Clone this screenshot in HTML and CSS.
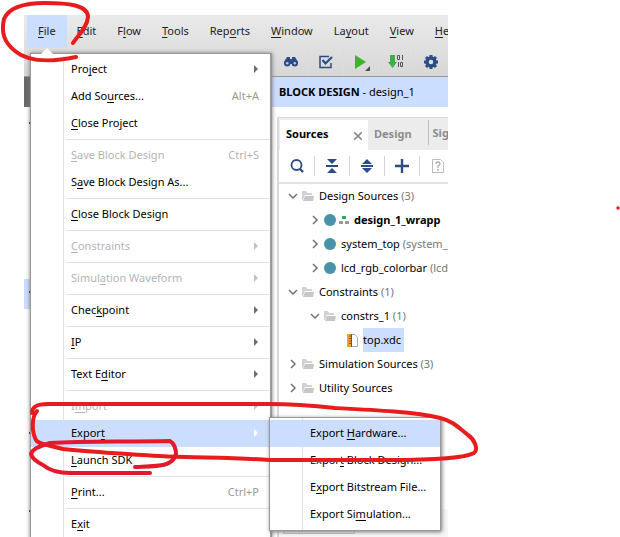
FILE: index.html
```html
<!DOCTYPE html>
<html lang="en">
<head>
<meta charset="utf-8">
<title>Block Design</title>
<link rel="stylesheet" href="styles.css">
</head>
<body>
<svg class="defs" aria-hidden="true">
  <symbol id="folder" viewBox="0 0 12 12"><path d="M0 1h4l1 2h5v2H3l-2 5H0z" fill="#d2d2d2"/><path d="M3 6h9l-1 5H1z" fill="#c6c6c6"/></symbol>
  <symbol id="open" viewBox="0 0 10 10"><path d="M1 3l4 4 4-4" fill="none" stroke="#737373" stroke-width="1.5"/></symbol>
  <symbol id="closed" viewBox="0 0 10 10"><path d="M3 1l4 4-4 4" fill="none" stroke="#737373" stroke-width="1.5"/></symbol>
</svg>
<main class="app">
  <div class="chrome">
    <nav class="menubar">
      <div class="file">
        <button class="top active"><u>F</u>ile</button>
        <div class="menu">
          <ul>
            <li><button>Pro<u>j</u>ect<i class="arrow"></i></button></li>
            <li><button>Add So<u>u</u>rces...<kbd>Alt+A</kbd></button></li>
            <li><button><u>C</u>lose Project</button></li>
            <li class="sep"></li>
            <li><button disabled><u>S</u>ave Block Design<kbd>Ctrl+S</kbd></button></li>
            <li><button>S<u>a</u>ve Block Design As...</button></li>
            <li class="sep"></li>
            <li><button><u>C</u>lose Block Design</button></li>
            <li class="sep"></li>
            <li><button disabled><u>C</u>onstraints<i class="arrow"></i></button></li>
            <li class="sep"></li>
            <li><button disabled>Simul<u>a</u>tion Waveform<i class="arrow"></i></button></li>
            <li class="sep"></li>
            <li><button>Chec<u>k</u>point<i class="arrow"></i></button></li>
            <li class="sep"></li>
            <li><button><u>I</u>P<i class="arrow"></i></button></li>
            <li class="sep"></li>
            <li><button>Text E<u>d</u>itor<i class="arrow"></i></button></li>
            <li class="sep"></li>
            <li><button disabled>I<u>m</u>port<i class="arrow"></i></button></li>
            <li class="parent"><button class="hot">Expor<u>t</u><i class="arrow"></i></button>
              <ul class="submenu">
                <li><button class="hot">Export <u>H</u>ardware...</button></li>
                <li><button>Expor<u>t</u> Block Design...</button></li>
                <li><button>E<u>x</u>port Bitstream File...</button></li>
                <li><button>Export Si<u>m</u>ulation...</button></li>
              </ul>
            </li>
            <li><button><u>L</u>aunch SDK</button></li>
            <li class="sep"></li>
            <li><button><u>P</u>rint...<kbd>Ctrl+P</kbd></button></li>
            <li class="sep"></li>
            <li><button>E<u>x</u>it</button></li>
          </ul>
        </div>
      </div>
      <button class="top"><u>E</u>dit</button>
      <button class="top">F<u>l</u>ow</button>
      <button class="top"><u>T</u>ools</button>
      <button class="top">Rep<u>o</u>rts</button>
      <button class="top"><u>W</u>indow</button>
      <button class="top">La<u>y</u>out</button>
      <button class="top"><u>V</u>iew</button>
      <button class="top"><u>H</u>e</button>
    </nav>
    <div class="toolbar">
      <button aria-label="Find"><svg width="16" height="16" viewBox="0 0 16 16"><path d="M4 3h3v2h2V3h3l3 5v2H1V8z" fill="#2d4b84"/><circle cx="4.2" cy="9.3" r="3.2" fill="#2d4b84"/><circle cx="11.8" cy="9.3" r="3.2" fill="#2d4b84"/><circle cx="4.2" cy="9.3" r="1.3" fill="#b7c4df"/><circle cx="11.8" cy="9.3" r="1.3" fill="#b7c4df"/></svg></button>
      <button aria-label="Validate"><svg width="16" height="16" viewBox="0 0 16 16"><path d="M11 2.5H2v11h11V9" fill="none" stroke="#2d4b84" stroke-width="1.5"/><path d="M4.5 6l3 3.5L14 3" fill="none" stroke="#2d4b84" stroke-width="2.2"/></svg></button>
      <button aria-label="Run"><svg width="18" height="18" viewBox="0 0 18 18"><path d="M3 2l11 7-11 7z" fill="#3cb52b"/><path d="M18 13v5h-5z" fill="#505050"/></svg></button>
      <button aria-label="Generate bitstream"><svg width="16" height="16" viewBox="0 0 16 16"><path d="M2 1h5v7h2l-4.5 6L0 8h2z" fill="#3fae49"/><path d="M9.500 1.500h2v4h-2zM14.500 1v5M10.500 8v5M12.500 8.500h2v4h-2z" fill="none" stroke="#555"/></svg></button>
      <button aria-label="Settings"><svg width="16" height="16" viewBox="0 0 16 16"><circle cx="8" cy="8" r="4" fill="none" stroke="#2d4b84" stroke-width="3.400"/><path d="M8 1v3M8 12v3M1 8h3M12 8h3M3 3l2 2M11 11l2 2M3 13l2-2M11 5l2-2" stroke="#2d4b84" stroke-width="3"/></svg></button>
    </div>
  </div>
  <header class="titles"><span class="flowhead"></span><h1>BLOCK DESIGN <span>- design_1</span></h1></header>
  <div class="body">
    <aside class="navigator"><i class="mark one"></i><div class="current"><i class="mark"></i></div><i class="mark two"></i><i class="mark three"></i></aside>
    <section class="panel">
      <div class="tabs">
        <button class="tab selected">Sources<svg width="8" height="8" viewBox="0 0 8 8"><path d="M0 0l8 8M8 0L0 8" stroke="#8c8c8c" stroke-width="1.600"/></svg></button>
        <button class="tab">Design</button>
        <button class="tab last">Sig</button>
      </div>
      <div class="tools">
        <button aria-label="Search"><svg width="16" height="16" viewBox="0 0 16 16"><circle cx="7.500" cy="7" r="5" fill="none" stroke="#2d4b84" stroke-width="1.800"/><path d="M11 11l3 3" stroke="#2d4b84" stroke-width="2.400"/></svg></button>
        <button aria-label="Collapse all"><svg width="14" height="16" viewBox="0 0 14 16"><path d="M2 1h10L7 6zM2 15h10l-5-5zM1 7h12v2H1z" fill="#2d4b84"/></svg></button>
        <button aria-label="Expand all"><svg width="14" height="16" viewBox="0 0 14 16"><path d="M7 1l5 5H2zM7 15l5-5H2zM1 7h12v2H1z" fill="#2d4b84"/></svg></button>
        <button aria-label="Add"><svg width="16" height="16" viewBox="0 0 16 16"><path d="M8 1v14M1 8h14" stroke="#2d4b84" stroke-width="2.400"/></svg></button>
        <button aria-label="Help"><svg width="14" height="16" viewBox="0 0 14 16"><path d="M1.500 1.500h8l3 3v10h-11z" fill="none" stroke="#bdbdbd"/><path d="M5 6q0-2 2-2t2 2q0 1-2 2v2M7 11v2" fill="none" stroke="#aaa" stroke-width="1.300"/></svg></button>
      </div>
      <ul class="tree">
        <li><svg class="tw"><use href="#open"/></svg><svg class="fo"><use href="#folder"/></svg><span>Design Sources <em>(3)</em></span></li>
        <li class="l2"><svg class="tw"><use href="#closed"/></svg><i class="dot"></i><svg class="hier" viewBox="0 0 10 8"><path d="M3 0h4v3H3z" fill="#2fae55"/><path d="M0 5h4v3H0zM6 5h4v3H6z" fill="#999"/></svg><b>design_1_wrapp</b></li>
        <li class="l2"><svg class="tw"><use href="#closed"/></svg><i class="dot"></i><span>system_top <em>(system_</em></span></li>
        <li class="l2"><svg class="tw"><use href="#closed"/></svg><i class="dot"></i><span>lcd_rgb_colorbar <em>(lcd_</em></span></li>
        <li><svg class="tw"><use href="#open"/></svg><svg class="fo"><use href="#folder"/></svg><span>Constraints <em>(1)</em></span></li>
        <li class="l2"><svg class="tw"><use href="#open"/></svg><svg class="fo"><use href="#folder"/></svg><span>constrs_1 <em>(1)</em></span></li>
        <li class="l3"><svg class="doc" viewBox="0 0 11 13"><path d="M4.500.500H8l2.500 3v9h-6z" fill="#fff" stroke="#aaa"/><path d="M0 0h4v13H0z" fill="#eda133"/><path d="M2 2h2M2 4.500h2M2 7h2M2 9.500h2M4.500 0v13" stroke="#82551c"/></svg><span class="picked">top.xdc</span></li>
        <li><svg class="tw"><use href="#closed"/></svg><svg class="fo"><use href="#folder"/></svg><span>Simulation Sources <em>(3)</em></span></li>
        <li><svg class="tw"><use href="#closed"/></svg><svg class="fo"><use href="#folder"/></svg><span>Utility Sources</span></li>
      </ul>
      <div class="views"><span class="view"></span></div>
    </section>
  </div>
</main>
<svg class="ink" width="620" height="537" viewBox="0 0 620 537" aria-hidden="true">
  <path d="M73 43C78 35 87 28 88 17C88 5 68 3 45 3C25 3 9 7 4 19C1 33 4 42 15 51C28 62 52 62 76 57"/>
  <path d="M37 411C31 418 32 432 36 440C38 444 44 444 63 449C90 452 116 453 142 455C180 458 230 457 270 460H390C430 460 465 458 474 453C479 449 474 439 468 435C459 428 453 421 440 418C415 412 374 410 335 408C308 405 290 404 268 404H48C36 404 32 407 32 413"/>
  <path class="deep" d="M150 473H70C58 473 49 470 43 465C37 462 32 458 31 454C32 449 43 445 50 443C85 441 120 442 170 441C174 443 176 449 176 454C173 467 157 466 135 467"/>
  <circle cx="618" cy="208" r="1.700"/>
</svg>
</body>
</html>
```
FILE: styles.css
```css
* { box-sizing: border-box; }
body {
  margin: 0;
  padding: 15px 172px 0 24px;
  background: #fff;
  color: #000;
  font: 11px/16px "Noto Sans", sans-serif;
}
button {
  border: 0;
  padding: 0;
  background: none;
  color: inherit;
  font: inherit;
  white-space: nowrap;
}
ul { list-style: none; margin: 0; padding: 0; }
u { text-underline-offset: 2px; text-decoration-skip-ink: none; }
.defs { display: none; }
.app { height: calc(100vh - 15px); clip-path: inset(0 -60px 0 0); display: flex; flex-direction: column; }
.chrome {
  background: linear-gradient(#eaeaea, #d7d7d7);
  border-bottom: 1px solid #989890;
  color: #222;
}
.menubar { display: flex; height: 33px; padding-left: 3px; clip-path: inset(0 0 -600px 0); }
.top { height: 33px; padding: 0 11px 2px 10px; flex: none; }
.active { background: #ccdeff; padding: 0 11px 2px; }
.file { position: relative; z-index: 2; }
.menu {
  position: absolute;
  top: 38px;
  left: 3px;
  width: 242px;
  padding-top: 2px;
  background: #fff;
  border: 1px solid #999;
  border-width: 1px 2px 1px 1px;
  box-shadow: 0 0 4px #777;
  color: #000;
}
.menu::before {
  content: "";
  position: absolute;
  top: -6px;
  left: 10px;
  border: 6px solid transparent;
  border-top: 0;
  border-bottom-color: #fff;
}
.menu > ul { background: linear-gradient(#e2e2e2, #e2e2e2) 32px 0 / 1px 100% no-repeat; }
.menu li button {
  display: flex;
  align-items: center;
  width: 100%;
  height: 27px;
  padding: 0 11px 2px 40px;
  text-align: left;
  white-space: pre;
}
.menu kbd { font: inherit; margin-left: auto; color: #9c9c8c; }
.menu button:disabled, .menu button:disabled kbd { color: #b4b4b4; }
.arrow {
  margin-left: auto;
  margin-right: 1px;
  border: 4px solid transparent;
  border-left-color: #6e6e6e;
  border-right: 0;
}
button:disabled .arrow { border-left-color: #c2c2c2; }
.menu .hot { background: #ccdeff; }
.hot .arrow { border-left-color: #fff; }
.sep { height: 1px; margin: 2px 0 2px 35px; background: #e2e2e2; }
.parent { position: relative; }
.submenu {
  position: absolute;
  top: -3px;
  left: 238px;
  width: 172px;
  padding: 2px 0;
  border: 1px solid #999;
  box-shadow: 1px 1px 4px #777;
  background: linear-gradient(#e2e2e2, #e2e2e2) 32px 0 / 1px 100% no-repeat #fff;
}
.toolbar { display: flex; height: 28px; padding-left: 250px; overflow: hidden; }
.toolbar button { flex: 0 0 35px; display: grid; place-items: center; border-right: 1px solid #dcdcdc; }
.titles { display: flex; flex: none; height: 30px; background: #ccdeff; overflow: hidden; }
.flowhead { flex: 0 0 246px; background: #696969; }
h1 { margin: 0; padding-left: 9px; font-size: 11px; line-height: 30px; white-space: nowrap; }
h1 span { font-weight: 400; }
.body { display: flex; flex: 1; min-height: 0; padding-top: 10px; overflow: hidden; }
.navigator { flex: 0 0 253px; display: flex; flex-direction: column; padding: 5px 0 0; }
.mark { display: block; flex: none; width: 2px; height: 2px; margin-left: 5px; background: #222; }
.current { flex: none; width: 30px; height: 30px; margin-top: 155px; padding-top: 12px; background: #ccdeff; }
.two { margin-top: 123px; }
.three { margin-top: 76px; }
.panel {
  flex: 1;
  min-width: 0;
  display: flex;
  flex-direction: column;
  border: solid #d9d9d9;
  border-width: 1px 0 0 2px;
  overflow: hidden;
}
.tabs { display: flex; flex: none; height: 32px; padding: 2px 0 0 1px; background: #ececec; overflow: hidden; }
.tab { flex: none; padding: 0 16px 2px 6px; font-weight: 700; color: #8c8c8c; }
.selected { display: flex; align-items: center; justify-content: space-between; width: 88px; padding: 0 6px 2px; background: #fff; color: #000; }
.selected svg { margin-top: 4px; }
.last { height: 25px; padding: 0 0 0 4px; border-left: 1px solid #bdbdbd; }
.tools { display: flex; flex: none; height: 34px; padding-left: 1px; align-items: center; border-bottom: 2px solid #e4e4e4; overflow: hidden; }
.tools button { flex: 0 0 35px; height: 20px; display: grid; place-items: center; border-right: 1px solid #d4d4d4; }
.tools button:last-child { border: 0; }
.tree { flex: 1; }
.tree li { display: flex; align-items: center; height: 24px; padding-left: 9px; white-space: nowrap; }
.tree svg, .dot { flex: none; }
.tree .l2 { padding-left: 31px; }
.tree .l3 { padding-left: 68px; }
.tw { width: 10px; height: 10px; margin-right: 4px; }
.fo { width: 12px; height: 12px; margin-right: 5px; }
.dot { width: 12px; height: 12px; border-radius: 50%; margin-right: 5px; background: #4693aa; }
.hier { width: 10px; height: 8px; margin-right: 5px; margin-left: -2px; }
.doc { width: 11px; height: 13px; margin-right: 5px; }
.picked { line-height: 24px; background: #ccdeff; padding-right: 3px; }
.tree em { font-style: normal; color: #777; }
.views { flex: none; height: 28px; padding: 0 0 3px 4px; background: #f7f7f7; display: flex; }
.view { width: 72px; border: 1px solid #c8c8c8; background: #f1f1f1; }
.ink { position: absolute; top: 0; left: 0; z-index: 5; pointer-events: none; }
.ink path { fill: none; stroke: #e81c1c; stroke-width: 4; stroke-linecap: round; stroke-linejoin: round; }
.ink .deep { stroke: #e5192c; }
.ink circle { fill: #e81c1c; }
```
